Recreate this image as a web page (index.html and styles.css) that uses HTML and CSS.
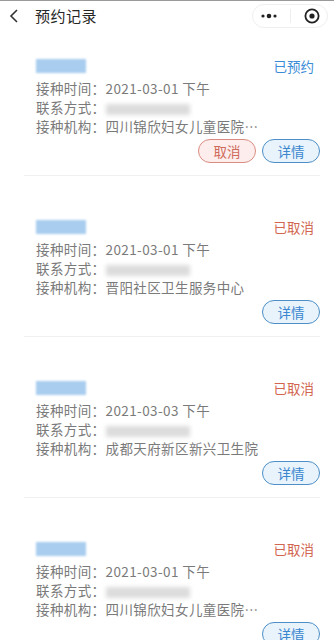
FILE: index.html
```html
<!DOCTYPE html>
<html lang="zh">
<head>
  <meta charset="UTF-8">
  <title>预约记录</title>
  <meta name="viewport" content="width=device-width, initial-scale=1">
  <link rel="stylesheet" href="styles.css">
</head>
<body>
  <div class="topbar">
    <svg class="back" width="10" height="16" viewBox="0 0 10 16"><polyline points="8,2 2,8 8,14" fill="none" stroke="#333" stroke-width="1.6"/></svg>
    <span class="title">预约记录</span>
    <div class="capsule">
      <svg width="20" height="8" viewBox="0 0 20 8"><circle cx="4" cy="4" r="1.6" fill="#222"/><circle cx="10" cy="4" r="2.3" fill="#222"/><circle cx="16" cy="4" r="1.6" fill="#222"/></svg>
      <span class="cap-line"></span>
      <svg width="18" height="18" viewBox="0 0 18 18"><circle cx="9" cy="9" r="6.6" fill="none" stroke="#222" stroke-width="1.8"/><circle cx="9" cy="9" r="2.6" fill="#222"/></svg>
    </div>
  </div>

  <div class="list">
    <div class="card">
      <div class="head">
        <div class="name"></div>
        <span class="status booked">已预约</span>
      </div>
      <div class="info">
        <div>接种时间：2021-03-01 下午</div>
        <div>联系方式：<span class="phone"></span></div>
        <div>接种机构：四川锦欣妇女儿童医院…</div>
      </div>
      <div class="btns">
        <span class="btn cancel">取消</span>
        <span class="btn detail">详情</span>
      </div>
    </div>

    <div class="card">
      <div class="head">
        <div class="name"></div>
        <span class="status canceled">已取消</span>
      </div>
      <div class="info">
        <div>接种时间：2021-03-01 下午</div>
        <div>联系方式：<span class="phone"></span></div>
        <div>接种机构：晋阳社区卫生服务中心</div>
      </div>
      <div class="btns">
        <span class="btn detail">详情</span>
      </div>
    </div>

    <div class="card">
      <div class="head">
        <div class="name"></div>
        <span class="status canceled">已取消</span>
      </div>
      <div class="info">
        <div>接种时间：2021-03-03 下午</div>
        <div>联系方式：<span class="phone"></span></div>
        <div>接种机构：成都天府新区新兴卫生院</div>
      </div>
      <div class="btns">
        <span class="btn detail">详情</span>
      </div>
    </div>

    <div class="card">
      <div class="head">
        <div class="name"></div>
        <span class="status canceled">已取消</span>
      </div>
      <div class="info">
        <div>接种时间：2021-03-01 下午</div>
        <div>联系方式：<span class="phone"></span></div>
        <div>接种机构：四川锦欣妇女儿童医院…</div>
      </div>
      <div class="btns">
        <span class="btn detail">详情</span>
      </div>
    </div>
  </div>
</body>
</html>
```

FILE: styles.css
```css
body {
  margin: 0;
  font-family: "Noto Sans CJK SC", "Noto Sans", sans-serif;
  background: #fff;
  color: #7a7a7a;
  border-top: 1px solid #9a9a9a;
  overflow: hidden;
}
.topbar {
  height: 39px;
  display: flex;
  align-items: center;
  padding-left: 9px;
  position: relative;
}
.back {
  margin-top: -10px;
}
.title {
  margin-left: 16px;
  margin-top: -10px;
  font-size: 15px;
  color: #262626;
  letter-spacing: 0.5px;
}
.capsule {
  position: absolute;
  top: 3px;
  right: 6px;
  width: 74px;
  height: 22px;
  border: 1px solid #efefef;
  border-radius: 12px;
  display: flex;
  align-items: center;
  justify-content: space-around;
}
.cap-line {
  width: 1px;
  height: 14px;
  background: #eee;
}
.card {
  margin: 0 14px 0 24px;
  padding: 41px 0 12px 12px;
  border-bottom: 1px solid #f0f0f0;
}
.card:first-child {
  padding-top: 16px;
}
.head {
  height: 20px;
  display: flex;
  justify-content: space-between;
  align-items: center;
}
.name {
  width: 50px;
  height: 14px;
  background: #a9cdef;
  filter: blur(0.8px);
}
.status {
  font-size: 13.5px;
  margin-right: 6px;
}
.booked {
  color: #3b8cd6;
}
.canceled {
  color: #d2654f;
}
.info {
  margin-top: 3px;
  font-size: 13.5px;
  letter-spacing: 0.4px;
  line-height: 19px;
}
.phone {
  display: inline-block;
  width: 84px;
  height: 11px;
  vertical-align: middle;
  background: #dcdcdc;
  filter: blur(2px);
}
.btns {
  margin-top: 3px;
  display: flex;
  justify-content: flex-end;
  gap: 6px;
}
.btn {
  width: 56px;
  height: 22px;
  line-height: 22px;
  text-align: center;
  font-size: 13.5px;
  border-radius: 12px;
}
.cancel {
  border: 1px solid #d98c80;
  background: #fdeeed;
  color: #cf6a5a;
}
.detail {
  border: 1px solid #4d8fc6;
  background: #e8f3fc;
  color: #3a86cf;
}
```
